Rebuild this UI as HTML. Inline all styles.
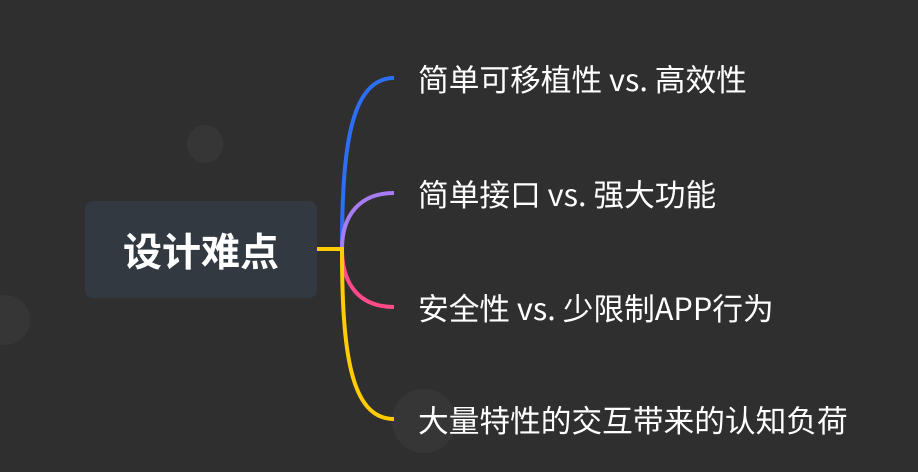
<!DOCTYPE html>
<html><head><meta charset="utf-8"><style>
body{margin:0;width:918px;height:472px;background:#2f2f2f;overflow:hidden;position:relative;font-family:"Noto Sans CJK SC","Liberation Sans",sans-serif;}
.c{position:absolute;border-radius:50%;background:#363636}
.root{position:absolute;left:85px;top:201px;width:232px;height:97px;background:#323940;border-radius:8px;color:#fff;font-weight:bold;font-size:39px;display:flex;align-items:center;justify-content:center}
.t{position:absolute;left:418px;color:#fff;font-size:30.7px;line-height:36px;white-space:nowrap}
</style></head><body>
<div class="c" style="left:187px;top:125px;width:36px;height:38px"></div>
<div class="c" style="left:-20px;top:295px;width:50px;height:50px"></div>
<div class="c" style="left:392px;top:389px;width:64px;height:64px"></div>
<svg width="918" height="472" style="position:absolute;left:0;top:0">
<g fill="none" stroke-width="4">
<path d="M342 249 C342 150 350 78 394 78" stroke="#2d6ef7"/>
<path d="M342 249 C342 215 360 193 394 193" stroke="#a77cf2"/>
<path d="M342 249 C342 285 360 307 394 307" stroke="#ff4b8a"/>
<path d="M342 249 C342 350 350 419 394 419" stroke="#ffcc00"/>
<path d="M317 249 L344 249" stroke="#ffcc00"/>
</g></svg>
<div class="root">设计难点</div>
<div class="t" style="top:60px">简单可移植性 vs. 高效性</div>
<div class="t" style="top:175px">简单接口 vs. 强大功能</div>
<div class="t" style="top:289px">安全性 vs. 少限制APP行为</div>
<div class="t" style="top:401px">大量特性的交互带来的认知负荷</div>
</body></html>
